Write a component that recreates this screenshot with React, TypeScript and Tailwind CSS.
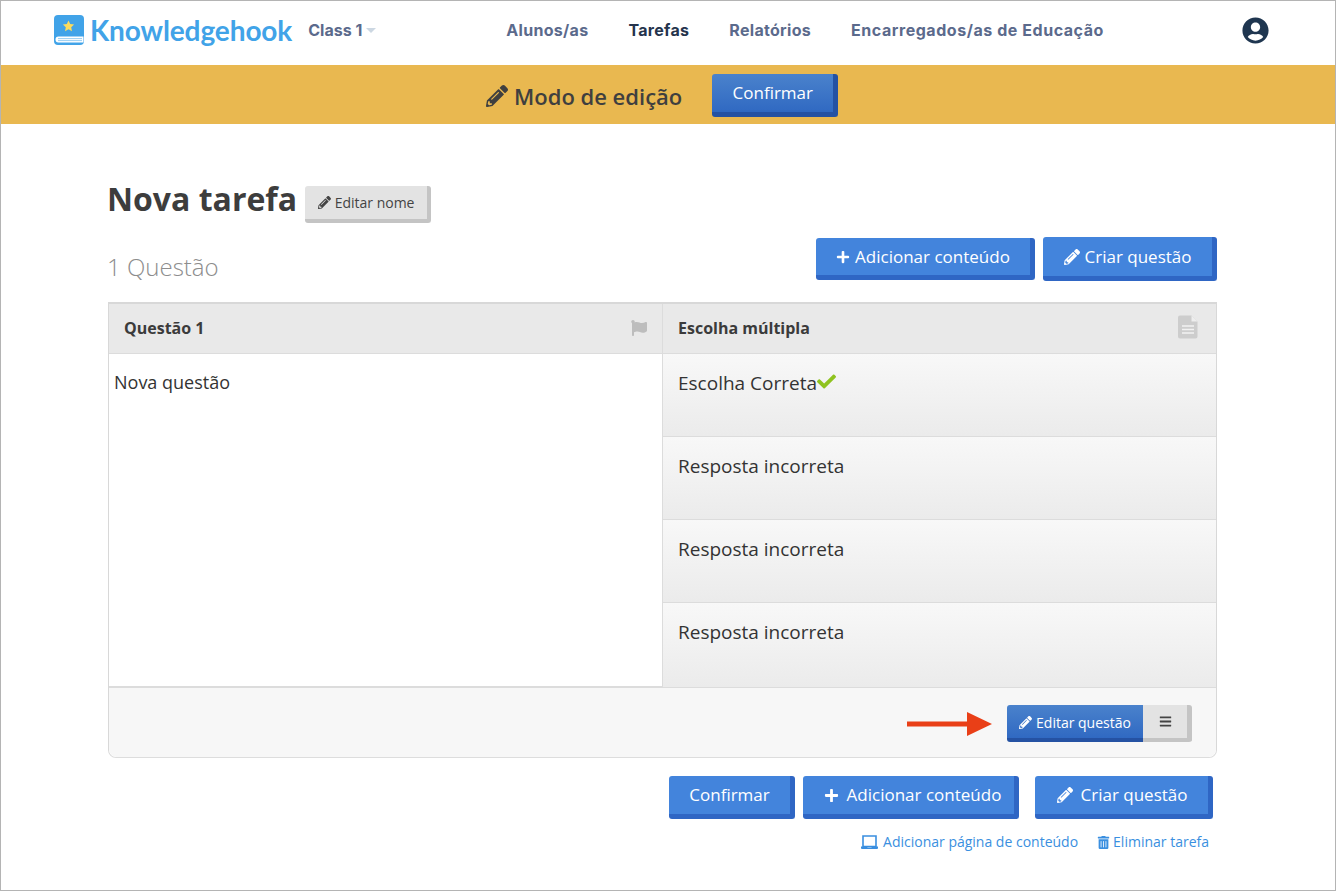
import { FaBars, FaCheck, FaFlag, FaPencilAlt, FaPlus, FaTrashAlt, FaUserCircle } from "react-icons/fa";

function Logo() {
  return (
    <svg width="30" height="30" viewBox="0 0 30 30">
      <path d="M4 0h22a4 4 0 0 1 4 4v22a4 4 0 0 1-4 4H4a4 4 0 0 1-4-4V4a4 4 0 0 1 4-4z" fill="#41a3e8" />
      <path d="M2.5 21.5h27v6h-25a3 3 0 0 1 0-6z" fill="#fff" />
      <path d="M4 23.6h24M4 25.6h24" stroke="#7cc0ee" strokeWidth="0.8" />
      <path d="M14.5 5.5l1.7 3.6 3.9.5-2.9 2.7.8 3.9-3.5-2-3.5 2 .8-3.9-2.9-2.7 3.9-.5z" fill="#fbdc5d" />
    </svg>
  );
}

function BlueButton({ children, className }: { children: React.ReactNode; className: string }) {
  return (
    <div className={`flex items-center justify-center rounded-[3px] border-r-[5px] border-b-[5px] border-[#2f66c4] bg-[#4384dc] text-white ${className}`}>
      {children}
    </div>
  );
}

function AnswerRow({ text, correct, last }: { text: string; correct?: boolean; last?: boolean }) {
  return (
    <div className={`flex items-start bg-gradient-to-b from-[#f8f8f8] to-[#ebebeb] pl-[15px] pt-[17px] text-[19px] leading-6 text-[#333] ${last ? "h-[84px]" : "h-[83px] border-b border-[#dcdcdc]"}`}>
      {text}
      {correct && <FaCheck className="mt-[1px] text-[19px] text-[#8fc31f]" />}
    </div>
  );
}

export default function App() {
  return (
    <div className="h-[891px] w-[1336px] overflow-hidden border border-[#b4b4b4] bg-white font-['Open_Sans',sans-serif] text-[#3b3b3b]">
      {/* Barra de navegación */}
      <div className="flex h-[64px] items-center pb-[6px] pl-[53px]">
        <Logo />
        <span className="ml-[6px] font-['Lato',sans-serif] text-[28px] font-bold leading-none tracking-[-0.1px] text-[#41a3e8]">Knowledgehook</span>
        <span className="ml-[16px] font-['Inter',sans-serif] text-[16px] font-bold text-[#5b6a8c]">Class 1</span>
        <span className="ml-[4px] mt-[1px] h-0 w-0 border-x-[5px] border-t-[5px] border-x-transparent border-t-[#ccd7e2]" />
        <nav className="ml-[130px] flex gap-[40px] font-['Inter',sans-serif] text-[16px] font-bold tracking-[0.3px] text-[#5b6a8c]">
          <span>Alunos/as</span>
          <span className="text-[#25344d]">Tarefas</span>
          <span>Relatórios</span>
          <span className="tracking-[0.55px]">Encarregados/as de Educação</span>
        </nav>
        <FaUserCircle className="ml-[138px] text-[27px] text-[#1f3650]" />
      </div>

      {/* Modo de edición */}
      <div className="flex h-[59px] items-start bg-[#e9b850] pl-[485px]">
        <div className="mt-[16px] flex items-center gap-[6px] text-[22px] font-semibold leading-[30px] text-[#3f3f3f]">
          <FaPencilAlt className="text-[22px]" />
          <span>Modo de edição</span>
        </div>
        <div className="ml-[30px] mt-[9px] flex h-[43px] w-[126px] items-center justify-center rounded-[3px] border-r-[5px] border-b-[5px] border-[#2552a3] bg-gradient-to-b from-[#4a82cc] to-[#3069c2] pb-[1px] text-[17px] text-white">
          Confirmar
        </div>
      </div>

      <div className="ml-[107px] w-[1109px]">
        {/* Título */}
        <div className="mt-[57px] flex h-[38px] items-start">
          <h1 className="-ml-[1px] text-[32px] font-bold leading-[36px] text-[#3d3d3d]">Nova tarefa</h1>
          <div className="ml-[8px] mt-[5px] flex h-[37px] w-[126px] items-center justify-center gap-[4px] rounded-[3px] border-r-[4px] border-b-[4px] border-[#c4c4c4] bg-[#e3e3e3] text-[14px] text-[#444]">
            <FaPencilAlt className="text-[13px]" />
            Editar nome
          </div>
        </div>

        <div className="mt-[18px] flex h-[44px] items-center">
          <span className="-ml-[1px] mt-[16px] text-[24px] font-light text-[#8d8d8d]">1 Questão</span>
          <BlueButton className="ml-auto h-[42px] w-[219px] gap-[5px] text-[17px]">
            <FaPlus className="text-[14px]" />
            Adicionar conteúdo
          </BlueButton>
          <BlueButton className="ml-[8px] h-[44px] w-[174px] gap-[5px] text-[17px]">
            <FaPencilAlt className="text-[16px]" />
            Criar questão
          </BlueButton>
        </div>

        {/* Tabla de la questão */}
        <div className="mt-[21px] rounded-b-[8px] border-x border-b border-t-2 border-x-[#d8d8d8] border-b-[#dddddd] border-t-[#d8d8d8]">
          <div className="flex h-[384px] border-b-2 border-[#dcdcdc]">
            <div className="w-[554px] border-r border-[#dcdcdc]">
              <div className="flex h-[50px] items-center justify-between border-b border-[#dcdcdc] bg-[#e9e9e9] pb-[1px] pl-[15px] pr-[15px] text-[16px] font-bold text-[#3b3b3b]">
                Questão 1
                <FaFlag className="text-[16px] text-[#bdbdbd]" />
              </div>
              <div className="pl-[5px] pt-[16px] text-[18px] leading-6 text-[#333]">Nova questão</div>
            </div>
            <div className="flex-1">
              <div className="flex h-[50px] items-center justify-between border-b border-[#dcdcdc] bg-[#e9e9e9] pb-[3px] pl-[15px] pr-[18px] text-[16px] font-bold text-[#3b3b3b]">
                <span className="mt-[2px]">Escolha múltipla</span>
                <svg width="20" height="24" viewBox="0 0 20 24">
                  <path d="M2 0.5h11.5l6 6V21.5a2 2 0 0 1-2 2H2a2 2 0 0 1-2-2V2.5a2 2 0 0 1 2-2z" fill="#cdcdcd" />
                  <path d="M13.5 0.5v6h6z" fill="#eeeeee" />
                  <path d="M4 11h12M4 14.5h12M4 18h12" stroke="#f2f2f2" strokeWidth="1.4" />
                </svg>
              </div>
              <AnswerRow text="Escolha Correta" correct />
              <AnswerRow text="Resposta incorreta" />
              <AnswerRow text="Resposta incorreta" />
              <AnswerRow text="Resposta incorreta" last />
            </div>
          </div>
          <div className="flex h-[69px] items-center justify-end rounded-b-[8px] bg-[#f7f7f7] pr-[24px] pt-[2px]">
            <svg width="86" height="26" viewBox="0 0 86 26" className="mr-[14px]">
              <path d="M0 10.5h60V1L85 13 60 25v-9.5H0z" fill="#e93f17" />
            </svg>
            <div className="flex h-[37px] w-[136px] items-center justify-center gap-[4px] rounded-l-[3px] border-b-[4px] border-[#2552a3] bg-gradient-to-b from-[#4a82cc] to-[#3069c2] pt-[1px] text-[14px] text-white">
              <FaPencilAlt className="text-[13px]" />
              Editar questão
            </div>
            <div className="flex h-[37px] w-[49px] items-center justify-center rounded-r-[3px] border-r-[5px] border-b-[4px] border-[#c4c4c4] bg-[#e3e3e3] text-[#444]">
              <FaBars className="text-[13px]" />
            </div>
          </div>
        </div>

        {/* Acciones inferiores */}
        <div className="mt-[18px] flex justify-end gap-[8px] pr-[4px]">
          <BlueButton className="h-[43px] w-[126px] pb-[1px] text-[17px]">Confirmar</BlueButton>
          <BlueButton className="h-[43px] w-[216px] gap-[8px] pl-[8px] text-[17px]">
            <FaPlus className="text-[15px]" />
            Adicionar conteúdo
          </BlueButton>
          <BlueButton className="ml-[8px] h-[43px] w-[178px] gap-[8px] pl-[1px] text-[17px]">
            <FaPencilAlt className="text-[16px]" />
            Criar questão
          </BlueButton>
        </div>
        <div className="mt-[14px] flex items-center justify-end pr-[8px] text-[14px] leading-[18px] text-[#3a8fe0]">
          <svg width="17" height="15" viewBox="0 0 17 15" className="mr-[5px]">
            <path d="M2 1h13v10.5h-13z" fill="none" stroke="#3a8fe0" strokeWidth="1.6" />
            <path d="M0 11.5h6l.5 1h4l.5-1h6v1.5a1 1 0 0 1-1 1H1a1 1 0 0 1-1-1z" fill="#3a8fe0" />
          </svg>
          Adicionar página de conteúdo
          <FaTrashAlt className="ml-[19px] mr-[3px] text-[13px]" />
          Eliminar tarefa
        </div>
      </div>
    </div>
  );
}
